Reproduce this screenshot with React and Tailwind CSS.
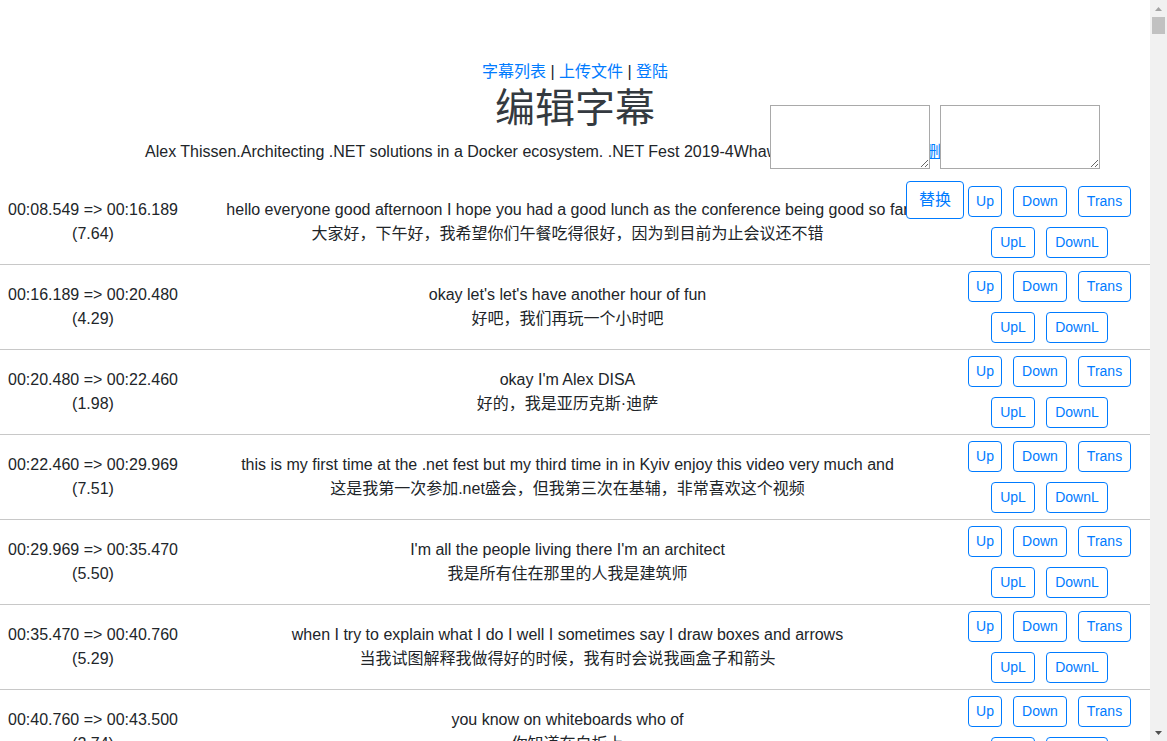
import React from "react";

const rows = [
  ["00:08.549", "00:16.189", "7.64", "hello everyone good afternoon I hope you had a good lunch as the conference being good so far", "大家好，下午好，我希望你们午餐吃得很好，因为到目前为止会议还不错"],
  ["00:16.189", "00:20.480", "4.29", "okay let's let's have another hour of fun", "好吧，我们再玩一个小时吧"],
  ["00:20.480", "00:22.460", "1.98", "okay I'm Alex DISA", "好的，我是亚历克斯·迪萨"],
  ["00:22.460", "00:29.969", "7.51", "this is my first time at the .net fest but my third time in in Kyiv enjoy this video very much and", "这是我第一次参加.net盛会，但我第三次在基辅，非常喜欢这个视频"],
  ["00:29.969", "00:35.470", "5.50", "I'm all the people living there I'm an architect", "我是所有住在那里的人我是建筑师"],
  ["00:35.470", "00:40.760", "5.29", "when I try to explain what I do I well I sometimes say I draw boxes and arrows", "当我试图解释我做得好的时候，我有时会说我画盒子和箭头"],
  ["00:40.760", "00:43.500", "2.74", "you know on whiteboards who of", "你知道在白板上"],
  ["00:43.500", "00:47.210", "3.71", "you has ever drawn boxes and arrows on a whiteboard", "你们谁曾经在白板上画过盒子和箭头"],
  ["00:47.210", "00:52.330", "5.12", "yeah well that's basically what I do", "是的，这基本上就是我所做的"],
];

const btn =
  "h-[31px] rounded-[4px] border border-[#007bff] bg-white text-[14px] leading-[21px] text-[#007bff] flex items-center justify-center";

function Row({ r }) {
  return (
    <div className="grid grid-cols-[186px_1fr_201px] border-b border-[#c8c8c8] h-[85px]">
      <div className="flex flex-col justify-center items-center text-center leading-6">
        <div>
          {r[0]} =&gt; {r[1]}
        </div>
        <div>({r[2]})</div>
      </div>
      <div className="flex flex-col justify-center items-center text-center leading-6">
        <div>{r[3]}</div>
        <div>{r[4]}</div>
      </div>
      <div className="flex flex-col items-center pt-[6px] gap-[10px]">
        <div className="flex gap-[11px]">
          <button className={btn + " w-[34px]"}>Up</button>
          <button className={btn + " w-[54px]"}>Down</button>
          <button className={btn + " w-[53px]"}>Trans</button>
        </div>
        <div className="flex gap-[11px]">
          <button className={btn + " w-[44px]"}>UpL</button>
          <button className={btn + " w-[62px]"}>DownL</button>
        </div>
      </div>
    </div>
  );
}

export default function App() {
  return (
    <div
      className="bg-white text-[#212529] text-base min-h-screen w-[1150px]"
      style={{ fontFamily: '"Liberation Sans", Arial, "Noto Sans CJK SC", sans-serif' }}
    >
      <div className="pt-[60px] text-center">
        <div className="leading-6">
          <a className="text-[#007bff]">字幕列表</a> | <a className="text-[#007bff]">上传文件</a> |{" "}
          <a className="text-[#007bff]">登陆</a>
        </div>
        <h1 className="text-[40px] leading-[48px] mb-2 text-[#343a40] font-normal">编辑字幕</h1>
        <p className="leading-6 mb-4 whitespace-nowrap">
          Alex Thissen.Architecting .NET solutions in a Docker ecosystem. .NET Fest 2019-4WhawRsfYkE_1080p.mp4{" "}
          <a className="text-[#007bff] underline">删除该字幕</a>
        </p>
      </div>
      <div>
        {rows.map((r, i) => (
          <Row key={i} r={r} />
        ))}
      </div>
      <div className="fixed left-[770px] top-[105px] flex gap-[10px]">
        <textarea className="w-[160px] h-[64px] border border-[#a9a9a9] bg-white" />
        <textarea className="w-[160px] h-[64px] border border-[#a9a9a9] bg-white" />
      </div>
      <button className="fixed left-[906px] top-[181px] h-[38px] w-[58px] rounded-[4px] border border-[#007bff] bg-white text-[#007bff] text-base leading-6">
        替换
      </button>
      <div className="fixed right-0 top-0 h-screen w-[17px] bg-[#f1f1f1] flex flex-col items-center">
        <div className="h-[17px] w-full flex items-center justify-center">
          <svg width="7" height="4" viewBox="0 0 7 4">
            <path d="M3.5 0 L7 4 L0 4 Z" fill="#a3a3a3" />
          </svg>
        </div>
        <div className="w-[13px] h-[17px] bg-[#c1c1c1]" />
        <div className="flex-1" />
        <div className="h-[17px] w-full flex items-center justify-center">
          <svg width="7" height="4" viewBox="0 0 7 4">
            <path d="M0 0 L7 0 L3.5 4 Z" fill="#505050" />
          </svg>
        </div>
      </div>
    </div>
  );
}
